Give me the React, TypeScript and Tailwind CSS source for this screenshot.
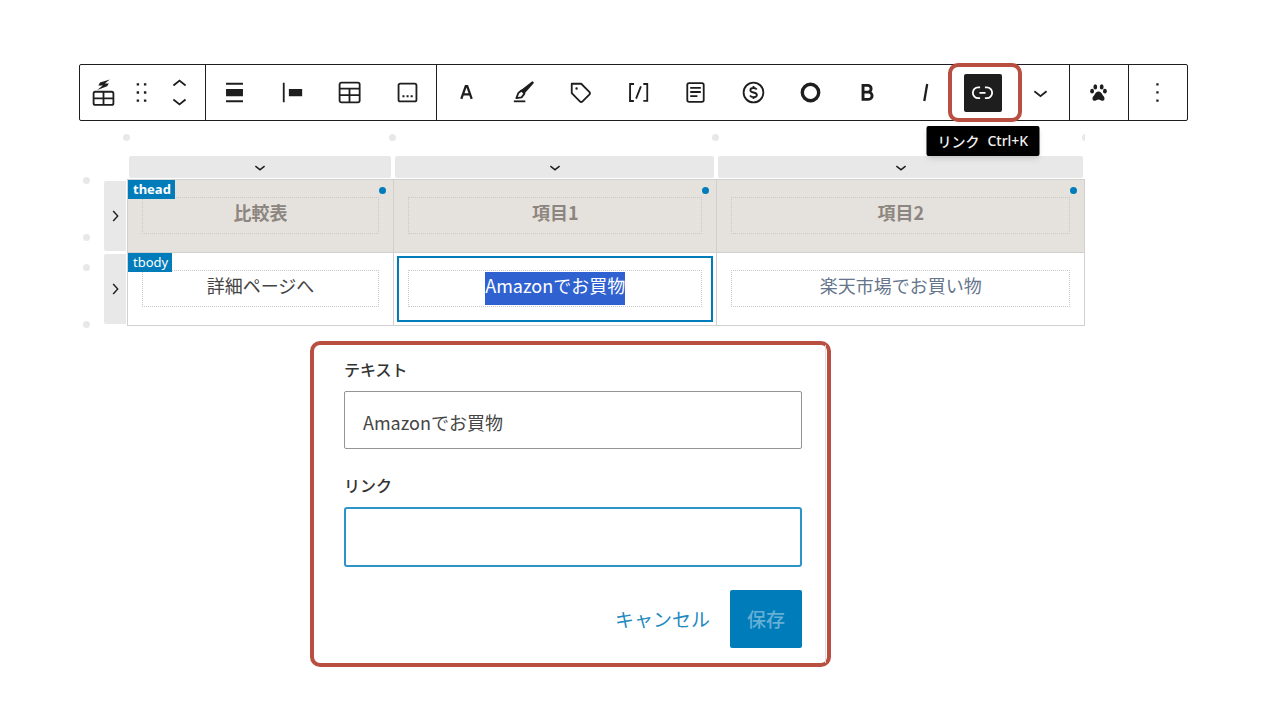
import { useState, type ReactNode } from "react";

function Icon({ children, className = "size-[29px]" }: { children: ReactNode; className?: string }) {
  return (
    <svg viewBox="0 0 24 24" fill="currentColor" className={`${className} shrink-0`} aria-hidden="true">
      {children}
    </svg>
  );
}

const line = { fill: "none", stroke: "currentColor", strokeWidth: 1.5 } as const;

const chevronDownPath = "M17.5 11.6L12 16l-5.5-4.4.9-1.2L12 14l4.5-3.6 1 1.2z";

function ToolButton({ label, children }: { label: string; children: ReactNode }) {
  return (
    <button type="button" aria-label={label} className="flex h-full min-w-0 flex-1 items-center justify-center">
      {children}
    </button>
  );
}

function Toolbar() {
  return (
    <div
      role="toolbar"
      aria-label="ブロックツール"
      className="grid h-[57px] grid-cols-[126fr_231fr_632fr_59fr_58fr] divide-x divide-[#1e1e1e] rounded-xs border border-[#1e1e1e] text-[#1e1e1e]"
    >
      <div className="flex items-center pl-1 pr-1.5">
        <ToolButton label="ブロック">
          <Icon>
            <path d="M17.2 1.2 9.1 3.8 7.7 6.2h3.7L6.8 9.9l8.2-3.1 1.4-2.3h-3.3z" />
            <rect x="3.8" y="11.4" width="16.4" height="10.8" rx="1.4" {...line} />
            <path d="M12 11.4v10.8M3.8 16.8h16.4" {...line} />
          </Icon>
        </ToolButton>
        <ToolButton label="ドラッグ">
          <Icon>
            <path d="M8 6.3h2v-2H8v2zm0 6.700h2v-2H8v2zm0 6.700h2v-2H8v2zm6-15.400v2h2v-2h-2zm0 8.700h2v-2h-2v2zm0 6.700h2v-2h-2v2z" />
          </Icon>
        </ToolButton>
        <ToolButton label="移動">
          <Icon>
            <path d="M6.500 5.600L12 1.200l5.500 4.400-.9 1.200L12 3.200 7.500 6.800z" />
            <path d="M17.500 18.400L12 22.800l-5.500-4.400.9-1.200L12 20.800l4.500-3.600z" />
          </Icon>
        </ToolButton>
      </div>
      <div className="flex items-center">
        <ToolButton label="配置">
          <Icon>
            <path d="M19 5.500H5V4h14v1.500ZM19 20H5v-1.500h14V20ZM5 9h14v6H5V9Z" />
          </Icon>
        </ToolButton>
        <ToolButton label="左揃え">
          <Icon>
            <path d="M9 9v6h11V9H9zM4 20h1.500V4H4v16z" />
          </Icon>
        </ToolButton>
        <ToolButton label="表を編集">
          <Icon>
            <rect x="3.800" y="3.800" width="16.600" height="16.400" rx="1.500" {...line} />
            <path d="M3.800 8.800h16.600M3.800 14.200h16.600M12 8.800v11.400" {...line} />
          </Icon>
        </ToolButton>
        <ToolButton label="オプション">
          <Icon>
            <rect x="4.600" y="4.600" width="14.800" height="14.800" rx="1.500" {...line} />
            <path d="M7.800 14.200h1.700v1.700H7.800zM11.200 14.200h1.700v1.700h-1.700zM14.600 14.200h1.700v1.700h-1.700z" />
          </Icon>
        </ToolButton>
      </div>
      <div className="flex items-center">
        <ToolButton label="文字色">
          <Icon>
            <path d="M7.700 17.200 11.400 6.800h1.200l3.700 10.400M9 13.500h6" {...line} strokeWidth="1.900" />
          </Icon>
        </ToolButton>
        <ToolButton label="マーカー">
          <Icon>
            <path d="M19.400 3.400 10.900 10l1.900 2 7.100-8.100z" stroke="currentColor" strokeWidth="1.300" strokeLinejoin="round" />
            <path d="M10.200 10.300 7.700 12.500 6.100 16.700 10.400 16 12.800 12.900z" {...line} strokeLinejoin="round" />
            <path d="M4 19.300h9.500" {...line} />
          </Icon>
        </ToolButton>
        <ToolButton label="タグ">
          <Icon>
            <path d="M4.750 4a.75.75 0 0 0-.75.75v7.826c0 .2.08.39.22.53l6.720 6.716a2.313 2.313 0 0 0 3.276-.001l5.610-5.611a2.315 2.315 0 0 0 0-3.264L13.104 4.220a.75.75 0 0 0-.53-.22H4.750ZM19 12.576a.815.815 0 0 1-.236.574l-5.610 5.611a.814.814 0 0 1-1.153 0L5.500 12.264V5.500h6.763l6.500 6.502a.816.816 0 0 1 .237.574ZM8.750 9.750a1 1 0 1 0 0-2 1 1 0 0 0 0 2Z" />
          </Icon>
        </ToolButton>
        <ToolButton label="ショートコード">
          <Icon>
            <path d="M16 4.200v1.500h2.500v12.500H16v1.500h4V4.200h-4zM4.200 19.800h4v-1.500H5.800V5.800h2.500V4.200h-4l-.1 15.600zm5.100-3.100l1.400.6 4-10-1.400-.6-4 10z" />
          </Icon>
        </ToolButton>
        <ToolButton label="注釈">
          <Icon>
            <rect x="5.200" y="4.300" width="13.600" height="15.400" rx="1.500" {...line} />
            <path d="M7.600 8.200h8.800M7.600 11.600h8.800M7.600 15h6" {...line} />
          </Icon>
        </ToolButton>
        <ToolButton label="価格">
          <Icon>
            <circle cx="12" cy="12" r="8.200" {...line} />
            <path
              d="M14.700 9.500c-.5-.8-1.500-1.200-2.700-1.200-1.500 0-2.600.7-2.600 1.800 0 2.700 5.400 1.100 5.400 3.900 0 1.100-1.200 1.800-2.800 1.800-1.300 0-2.300-.5-2.900-1.400M12 6.700v1.600M12 15.700v1.600"
              {...line}
            />
          </Icon>
        </ToolButton>
        <ToolButton label="丸">
          <Icon>
            <circle cx="12" cy="12" r="6.800" fill="none" stroke="currentColor" strokeWidth="2.800" />
          </Icon>
        </ToolButton>
        <ToolButton label="太字">
          <Icon>
            <path
              d="M8.300 6.100h3.900a2.700 2.700 0 0 1 0 5.600H8.300zM8.300 11.700h4.500a3 3 0 0 1 0 6H8.300z"
              fill="none"
              stroke="currentColor"
              strokeWidth="2.400"
            />
          </Icon>
        </ToolButton>
        <ToolButton label="斜体">
          <Icon>
            <path d="M13.400 5 11 19" fill="none" stroke="currentColor" strokeWidth="1.900" />
          </Icon>
        </ToolButton>
        <div className="relative h-full min-w-0 flex-1">
          <button
            type="button"
            aria-label="リンク"
            aria-describedby="link-tip"
            className="flex size-full items-center justify-center"
          >
            <span className="flex size-[38px] items-center justify-center rounded-xs bg-[#1e1e1e] text-white">
              <Icon>
                <path d="M10 17.389H8.444A5.194 5.194 0 1 1 8.444 7H10v1.500H8.444a3.694 3.694 0 0 0 0 7.389H10v1.500ZM14 7h1.556a5.194 5.194 0 0 1 0 10.390H14v-1.500h1.556a3.694 3.694 0 0 0 0-7.390H14V7Zm-4.500 6h5v-1.500h-5V13Z" />
              </Icon>
            </span>
          </button>
          <span className="pointer-events-none absolute -inset-y-0.5 -left-1.5 -right-2.5 rounded-[10px] border-4 border-[#b94f40]" />
          <span
            id="link-tip"
            role="tooltip"
            className="absolute left-1/2 top-[61px] z-10 flex h-[30px] w-[113px] -translate-x-1/2 items-center justify-center gap-2 whitespace-nowrap rounded-xs bg-black text-sm font-medium text-[#f0f0f0] shadow-md"
          >
            <span>リンク</span>
            <kbd className="font-['Noto_Sans',sans-serif]">Ctrl+K</kbd>
          </span>
        </div>
        <ToolButton label="さらに表示">
          <Icon>
            <path d={chevronDownPath} />
          </Icon>
        </ToolButton>
      </div>
      <div className="flex items-center">
        <ToolButton label="ペット">
          <svg viewBox="0 0 17 17" fill="currentColor" className="size-[17px]" aria-hidden="true">
            <ellipse cx="5.300" cy="2.900" rx="1.900" ry="2.700" />
            <ellipse cx="11.700" cy="2.900" rx="1.900" ry="2.700" />
            <ellipse cx="2.100" cy="7.200" rx="1.900" ry="2.400" />
            <ellipse cx="14.900" cy="7.200" rx="1.900" ry="2.400" />
            <path d="M8.500 7.600c2 0 3.100 1.600 4 3.200.8 1.300 2.100 2.300 2 4-.1 1.500-1.200 2.200-2.500 2-1.300-.2-2.100-1.200-3.500-1.200s-2.200 1-3.500 1.200c-1.300.2-2.400-.5-2.500-2-.1-1.700 1.200-2.700 2-4 .9-1.600 2-3.200 4-3.200z" />
          </svg>
        </ToolButton>
      </div>
      <div className="flex items-center">
        <ToolButton label="メニュー">
          <Icon>
            <path d="M12.900 19.700h-1.900v-1.900h1.900zM12.900 12.900h-1.900V11h1.900zM12.900 6.200h-1.900V4.300h1.900z" />
          </Icon>
        </ToolButton>
      </div>
    </div>
  );
}

function InsertDot({ label, className = "" }: { label: string; className?: string }) {
  return <button type="button" aria-label={label} className={`block size-[7px] shrink-0 rounded-full bg-[#e8e8e8] ${className}`} />;
}

const columns = "grid grid-cols-[266fr_323fr_369fr]";

function ColumnHandles() {
  return (
    <div className="ml-11 overflow-hidden pl-1">
      <div className={`${columns} h-[7px]`}>
        <InsertDot label="列を挿入" className="-ml-1" />
        <InsertDot label="列を挿入" className="-ml-1" />
        <div className="flex justify-between">
          <InsertDot label="列を挿入" className="-ml-1" />
          <InsertDot label="列を挿入" className="-mr-1" />
        </div>
      </div>
      <div className={`${columns} mt-[15px] h-[22px]`}>
        {[1, 2, 3].map((n) => (
          <button
            key={n}
            type="button"
            aria-label={`${n}列目を選択`}
            className="mx-0.5 flex items-center justify-center rounded-xs bg-[#e8e8e8] text-[#1e1e1e]"
          >
            <Icon className="size-[22px]">
              <path d={chevronDownPath} />
            </Icon>
          </button>
        ))}
      </div>
    </div>
  );
}

function RowHandles() {
  return (
    <>
      <div className="-mt-0.5 flex w-[25px] shrink-0 flex-col gap-[23px] pl-1">
        {[1, 2].map((n) => (
          <div key={n} className="flex h-16 flex-col justify-between">
            <InsertDot label="行を挿入" />
            <InsertDot label="行を挿入" />
          </div>
        ))}
      </div>
      <div className="mr-px flex w-[22px] shrink-0 flex-col gap-[3px] pt-0.5">
        {[1, 2].map((n) => (
          <button
            key={n}
            type="button"
            aria-label={`${n}行目を選択`}
            className="flex h-[70px] items-center justify-center rounded-l-xs bg-[#e8e8e8] text-[#1e1e1e]"
          >
            <Icon className="size-[22px]">
              <path d="M10.600 6l-1.200 1 4.600 5-4.600 5 1.200 1 5.400-6z" />
            </Icon>
          </button>
        ))}
      </div>
    </>
  );
}

function CellBox({ children, selected = false }: { children: ReactNode; selected?: boolean }) {
  return (
    <div className="border border-dotted border-[#c8c8c8] p-px text-lg leading-[27px]">
      <span className={`inline-block pb-1.5 align-top ${selected ? "bg-[#2f62d0] text-white" : ""}`}>{children}</span>
    </div>
  );
}

const cell = "relative border border-[#d0d0d0] px-3.5 pb-[18px] pt-[17px] text-center";

function SectionTag({ children, bold = false }: { children: ReactNode; bold?: boolean }) {
  return (
    <span
      className={`absolute left-0 top-0 bg-[#007cba] pl-[5px] pr-1 font-['Noto_Sans',sans-serif] text-[13px] leading-[19px] text-white ${bold ? "font-bold" : "font-normal"}`}
    >
      {children}
    </span>
  );
}

function ComparisonTable() {
  return (
    <table className="w-full table-fixed border-collapse">
      <colgroup>
        <col className="w-[27.8%]" />
        <col className="w-[33.8%]" />
        <col />
      </colgroup>
      <thead>
        <tr className="bg-[#e5e2dd] text-[#8d8580]">
          {["比較表", "項目1", "項目2"].map((title, i) => (
            <th key={title} scope="col" className={`${cell} font-bold`}>
              {i === 0 && <SectionTag bold>thead</SectionTag>}
              <span className="absolute right-[7px] top-[7px] size-[7px] rounded-full bg-[#007cba]" />
              <CellBox>{title}</CellBox>
            </th>
          ))}
        </tr>
      </thead>
      <tbody>
        <tr className="text-[#444444]">
          <td className={cell}>
            <SectionTag>tbody</SectionTag>
            <CellBox>詳細ページへ</CellBox>
          </td>
          <td className={cell}>
            <span className="pointer-events-none absolute inset-x-[3px] inset-y-[3px] border-2 border-[#007cba]" />
            <CellBox selected>Amazonでお買物</CellBox>
          </td>
          <td className={`${cell} text-[#65758b]`}>
            <CellBox>楽天市場でお買い物</CellBox>
          </td>
        </tr>
      </tbody>
    </table>
  );
}

function LinkForm() {
  const [text, setText] = useState("Amazonでお買物");
  const [url, setUrl] = useState("");
  return (
    <form
      onSubmit={(e) => e.preventDefault()}
      className="ml-[231px] mt-[13px] max-w-[521px] rounded-[10px] border-4 border-[#b94f40] pr-px"
    >
      <div className="flex flex-col border-r border-[#dddddd] pb-[15px] pl-[30px] pr-[23px] pt-3">
        <label htmlFor="link-text" className="text-base leading-6 font-medium text-[#333333]">
          テキスト
        </label>
        <input
          id="link-text"
          type="text"
          value={text}
          onChange={(e) => setText(e.target.value)}
          className="mt-2.5 h-[58px] w-full rounded-xs border border-[#949494] px-[18px] pt-1 text-lg text-[#444444] outline-none"
        />
        <label htmlFor="link-url" className="mt-6 text-base leading-6 font-medium text-[#333333]">
          リンク
        </label>
        <input
          id="link-url"
          type="url"
          value={url}
          onChange={(e) => setUrl(e.target.value)}
          className="mt-2.5 h-[60px] w-full rounded-[3px] border-2 border-[#2c94c8] px-[18px] text-lg text-[#444444] outline-none"
        />
        <div className="mt-[23px] flex items-center justify-end gap-5">
          <button type="button" className="text-[19px] text-[#2289c1]">
            キャンセル
          </button>
          <button
            type="submit"
            className="h-[58px] w-[72px] rounded-xs bg-[#007cba] text-[19px] font-medium text-[#66b0d6]"
          >
            保存
          </button>
        </div>
      </div>
    </form>
  );
}

export default function App() {
  return (
    <main className="min-h-screen bg-white pl-[79px] pr-[92px] pt-16 font-['Noto_Sans_CJK_JP',sans-serif]">
      <Toolbar />
      <section aria-label="比較表" className="mr-[103px] pt-[13px]">
        <ColumnHandles />
        <div className="mt-px flex items-start">
          <RowHandles />
          <ComparisonTable />
        </div>
      </section>
      <LinkForm />
    </main>
  );
}
